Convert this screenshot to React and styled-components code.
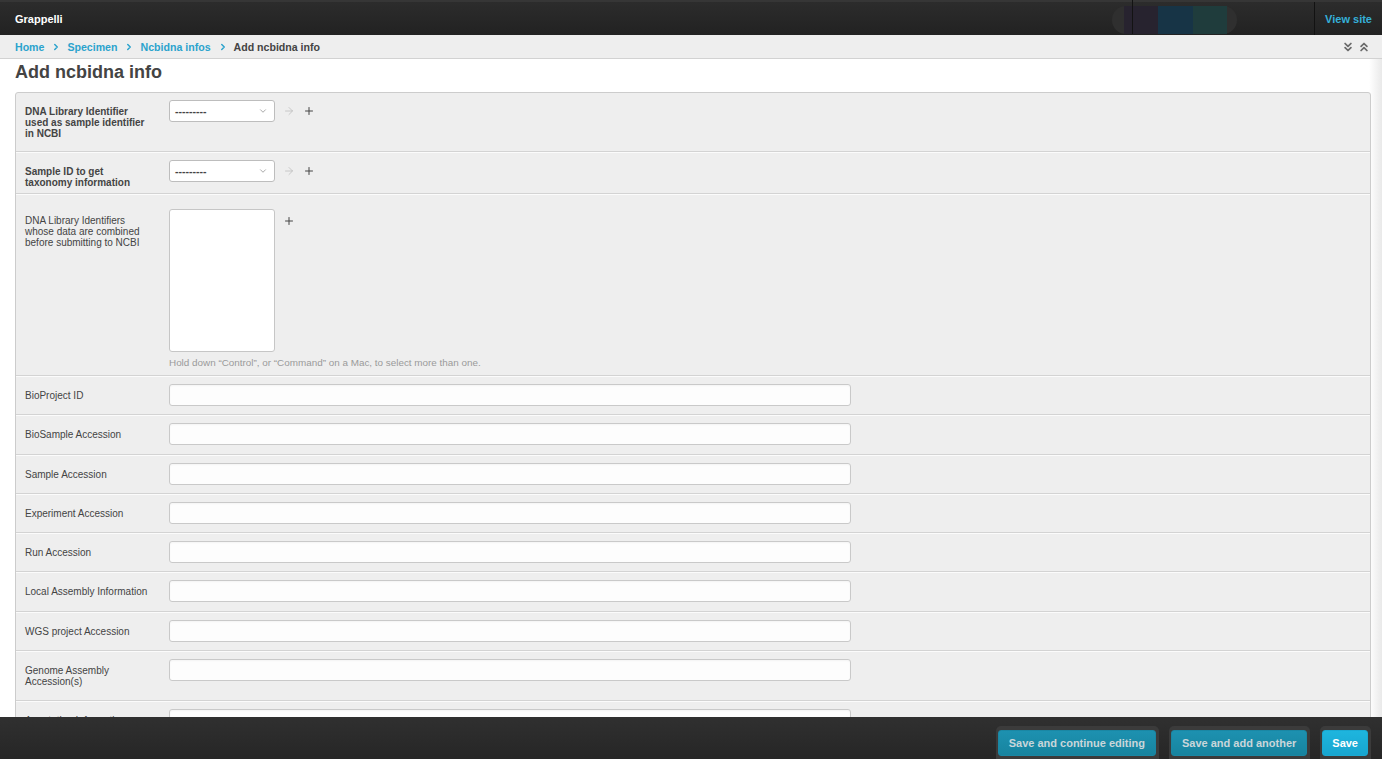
import React from "react";
import styled, { createGlobalStyle } from "styled-components";
import { ChevronRight, ChevronsDown, ChevronsUp, ChevronDown, ArrowRight, Plus } from "lucide-react";

const GlobalStyle = createGlobalStyle`
  html, body {
    margin: 0;
    padding: 0;
    height: 100%;
    overflow: hidden;
  }
  body {
    font-family: "Liberation Sans", Arial, sans-serif;
    color: #444;
    background: #fff;
  }
  * {
    box-sizing: border-box;
  }
`;

const Header = styled.header`
  height: 35px;
  display: flex;
  align-items: stretch;
  background: linear-gradient(#2c2c2c, #222);
  border-top: 2px solid #363636;
  & .brand {
    flex: 1;
    display: flex;
    align-items: center;
    padding-left: 15px;
    color: #fff;
    font-size: 11px;
    font-weight: bold;
  }
`;

const Pill = styled.div`
  position: relative;
  align-self: center;
  width: 125px;
  height: 28px;
  margin-top: 2px;
  margin-right: 77px;
  padding: 0 10px 0 12px;
  border-radius: 14px;
  background: #2f2f2f;
  display: flex;
  &::before {
    content: "";
    position: absolute;
    left: 20px;
    top: -7px;
    width: 1px;
    height: 35px;
    background: #131313;
  }
`;

const Swatch = styled.span`
  flex: 1;
  background: ${(p) => p.color};
`;

const ViewSite = styled.a`
  display: flex;
  align-items: center;
  padding: 0 10px 0 10px;
  border-left: 1px solid #121212;
  color: #35b0d9;
  font-size: 11px;
  font-weight: bold;
  text-decoration: none;
`;

const Breadcrumbs = styled.nav`
  height: 24px;
  display: flex;
  align-items: center;
  padding: 0 11px 0 15px;
  background: #eee;
  border-bottom: 1px solid #d2d2d2;
  font-size: 10.6px;
  font-weight: bold;
  & a {
    color: #2ba3cd;
    text-decoration: none;
  }
  & .sep {
    margin: 0 6px 0 7px;
    color: #2ba3cd;
    display: flex;
  }
  & .current {
    color: #444;
  }
  & .tools {
    margin-left: auto;
    display: flex;
    gap: 2px;
    color: #6a6a6a;
  }
`;

const Main = styled.main`
  padding: 2px 11px 60px 15px;
  height: calc(100vh - 59px);
  background: linear-gradient(to right, #fff calc(100% - 13px), #e9e9e9);
`;

const Title = styled.h1`
  margin: 0 0 9px;
  font-size: 18px;
  line-height: 22px;
  font-weight: bold;
  color: #444;
`;

const Fieldset = styled.div`
  background: #eee;
  border: 1px solid #ccc;
  border-radius: 3px;
`;

const Row = styled.div`
  display: flex;
  align-items: flex-start;
  padding: ${(p) => p.pad || "8px 10px 8.3px 9px"};
  & + & {
    border-top: 1px solid #d3d3d3;
    box-shadow: inset 0 1px 0 #fbfbfb;
  }
`;

const Label = styled.label`
  width: 125px;
  margin-right: 19px;
  padding: 6px 0 5px;
  font-size: 10px;
  line-height: 11px;
  font-weight: ${(p) => (p.required ? "bold" : "normal")};
  color: #444;
`;

const Field = styled.div`
  display: flex;
  flex-direction: column;
`;

const Controls = styled.div`
  display: flex;
  align-items: ${(p) => (p.top ? "flex-start" : "center")};
  gap: 8px;
  & .add {
    color: #444;
    display: flex;
    margin-top: ${(p) => (p.top ? "6px" : "0")};
  }
  & .go {
    color: #bbb;
    display: flex;
  }
`;

const Select = styled.div`
  width: 106px;
  height: 22px;
  display: flex;
  align-items: center;
  justify-content: space-between;
  padding: 0 6px 0 5px;
  background: #fff;
  border: 1px solid #bdbdbd;
  border-radius: 3px;
  font-size: 10.5px;
  font-weight: bold;
  color: #444;
  & svg {
    color: #999;
  }
`;

const MultiSelect = styled.div`
  width: 106px;
  height: 143px;
  background: #fff;
  border: 1px solid #c6c6c6;
  border-radius: 3px;
`;

const Help = styled.p`
  margin: 5px 0 0;
  font-size: 9.9px;
  line-height: 11px;
  color: #9a9a9a;
`;

const TextInput = styled.input`
  width: 682px;
  height: 22px;
  margin: 0;
  padding: 0 5px;
  background: #fdfdfd;
  border: 1px solid #c9c9c9;
  border-radius: 3px;
  box-shadow: inset 0 1px 2px rgba(0, 0, 0, 0.04);
  font-family: inherit;
  font-size: 11px;
  outline: none;
`;

const Footer = styled.footer`
  position: fixed;
  left: 0;
  right: 0;
  bottom: 0;
  height: 42px;
  display: flex;
  justify-content: flex-end;
  align-items: flex-start;
  gap: 10px;
  padding: 9px 11px 0 0;
  background: linear-gradient(#303030, #262626);
`;

const ButtonFrame = styled.div`
  padding: 4px 3px 3px 2px;
  background: #3b3b3b;
  border-radius: 5px 5px 0 0;
  height: 33px;
`;

const Button = styled.button`
  height: 26px;
  padding: 0 ${(p) => (p.primary ? "9px" : "10px")};
  border: 1px solid ${(p) => (p.primary ? "#1aa9d2" : "#1a87a4")};
  border-radius: 3px;
  background: ${(p) => (p.primary ? "linear-gradient(#1eb5de, #17a6d0)" : "linear-gradient(#1d91b0, #17849f)")};
  color: ${(p) => (p.primary ? "#fff" : "#c9d6da")};
  font-family: inherit;
  font-size: 11px;
  font-weight: bold;
  cursor: pointer;
`;

const simpleFields = [
  "BioProject ID",
  "BioSample Accession",
  "Sample Accession",
  "Experiment Accession",
  "Run Accession",
  "Local Assembly Information",
  "WGS project Accession",
  "Genome Assembly Accession(s)",
  "Annotation Information",
  "Submission Notes",
];

export default function App() {
  return (
    <>
      <GlobalStyle />
      <Header>
        <div className="brand">Grappelli</div>
        <Pill>
          <Swatch color="#27232f" />
          <Swatch color="#173446" />
          <Swatch color="#1f3c3c" />
        </Pill>
        <ViewSite href="#">View site</ViewSite>
      </Header>
      <Breadcrumbs>
        <a href="#">Home</a>
        <span className="sep"><ChevronRight size={10} strokeWidth={3.5} /></span>
        <a href="#">Specimen</a>
        <span className="sep"><ChevronRight size={10} strokeWidth={3.5} /></span>
        <a href="#">Ncbidna infos</a>
        <span className="sep"><ChevronRight size={10} strokeWidth={3.5} /></span>
        <span className="current">Add ncbidna info</span>
        <span className="tools">
          <ChevronsDown size={14} strokeWidth={3} />
          <ChevronsUp size={14} strokeWidth={3} />
        </span>
      </Breadcrumbs>
      <Main>
        <Title>Add ncbidna info</Title>
        <Fieldset>
          <Row pad="7px 10px 7px 9px">
            <Label required>DNA Library Identifier used as sample identifier in NCBI</Label>
            <Controls>
              <Select>
                <span>---------</span>
                <ChevronDown size={10} strokeWidth={2} />
              </Select>
              <span className="go"><ArrowRight size={12} strokeWidth={1.5} /></span>
              <span className="add"><Plus size={12} strokeWidth={2} /></span>
            </Controls>
          </Row>
          <Row pad="8px 10px 0 9px">
            <Label required>Sample ID to get taxonomy information</Label>
            <Controls>
              <Select>
                <span>---------</span>
                <ChevronDown size={10} strokeWidth={2} />
              </Select>
              <span className="go"><ArrowRight size={12} strokeWidth={1.5} /></span>
              <span className="add"><Plus size={12} strokeWidth={2} /></span>
            </Controls>
          </Row>
          <Row pad="15px 10px 7px 9px">
            <Label>DNA Library Identifiers whose data are combined before submitting to NCBI</Label>
            <Field>
              <Controls top>
                <MultiSelect />
                <span className="add"><Plus size={12} strokeWidth={2} /></span>
              </Controls>
              <Help>Hold down “Control”, or “Command” on a Mac, to select more than one.</Help>
            </Field>
          </Row>
          {simpleFields.map((name) => (
            <Row key={name}>
              <Label>{name}</Label>
              <TextInput type="text" />
            </Row>
          ))}
        </Fieldset>
      </Main>
      <Footer>
        <ButtonFrame>
          <Button>Save and continue editing</Button>
        </ButtonFrame>
        <ButtonFrame>
          <Button>Save and add another</Button>
        </ButtonFrame>
        <ButtonFrame>
          <Button primary>Save</Button>
        </ButtonFrame>
      </Footer>
    </>
  );
}
